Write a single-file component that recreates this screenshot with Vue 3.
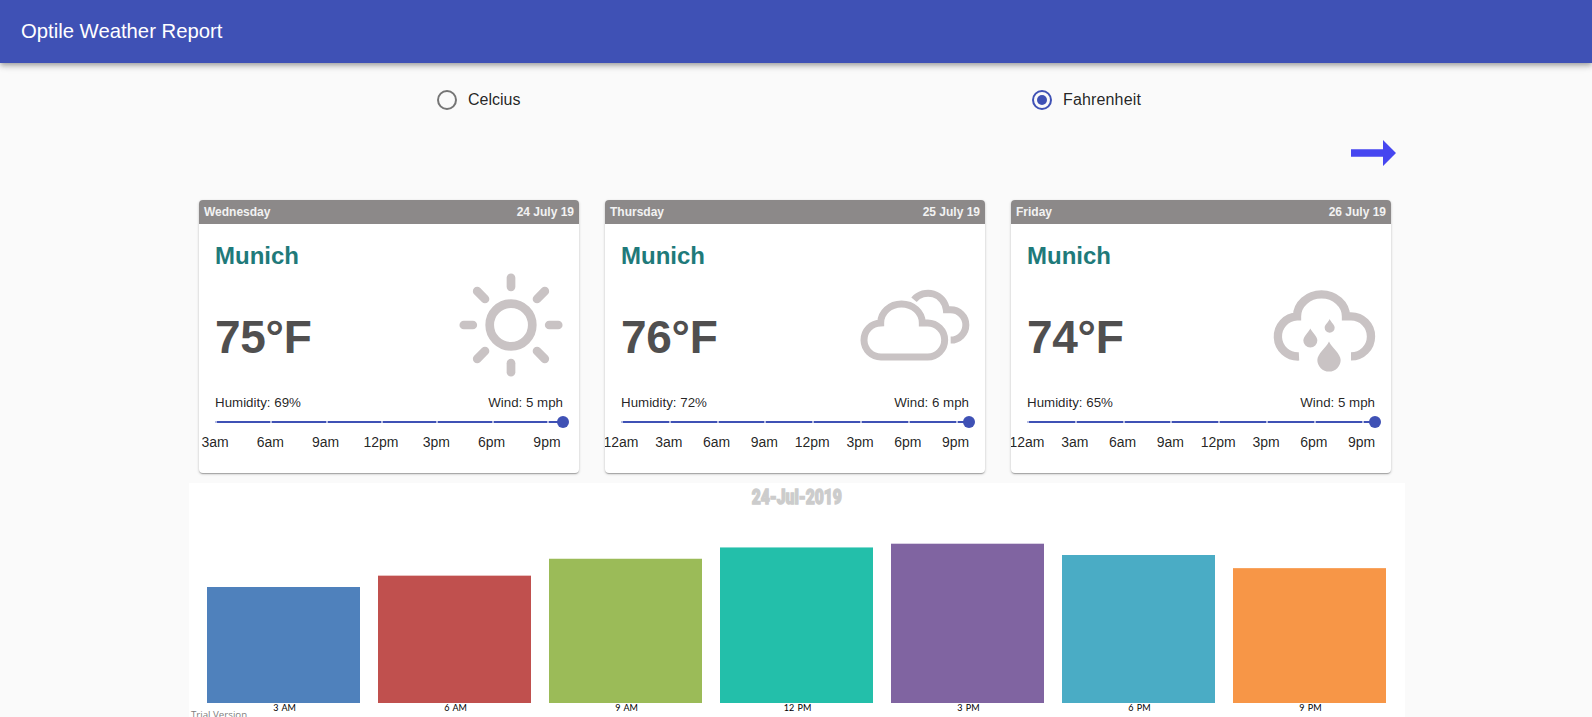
<script setup>
import { ref } from 'vue'

const unit = ref('fahrenheit')

const shortDay = ['3am', '6am', '9am', '12pm', '3pm', '6pm', '9pm']
const fullDay = ['12am', ...shortDay]

const cards = [
  { day: 'Wednesday', date: '24 July 19', city: 'Munich', temp: '75°F', humidity: '69%', wind: '5 mph', icon: 'sun', hours: shortDay, step: 55.33 },
  { day: 'Thursday', date: '25 July 19', city: 'Munich', temp: '76°F', humidity: '72%', wind: '6 mph', icon: 'clouds', hours: fullDay, step: 47.8 },
  { day: 'Friday', date: '26 July 19', city: 'Munich', temp: '74°F', humidity: '65%', wind: '5 mph', icon: 'rain', hours: fullDay, step: 47.8 }
]

const bars = [
  { label: '3 AM', height: 116, color: '#4f81bc' },
  { label: '6 AM', height: 127.35, color: '#c0504e' },
  { label: '9 AM', height: 144.25, color: '#9bbb58' },
  { label: '12 PM', height: 155.55, color: '#23bfaa' },
  { label: '3 PM', height: 159.3, color: '#8064a1' },
  { label: '6 PM', height: 148, color: '#4aacc5' },
  { label: '9 PM', height: 134.85, color: '#f79647' }
]

const rays = [0, 45, 90, 135, 180, 225, 270, 315]
</script>

<template>
  <div class="page">
    <header class="bar"><h1>Optile Weather Report</h1></header>

    <div class="units">
      <label class="unit celsius" @click="unit = 'celsius'">
        <span class="radio" :class="{ on: unit === 'celsius' }"></span>Celcius
      </label>
      <label class="unit fahrenheit" @click="unit = 'fahrenheit'">
        <span class="radio" :class="{ on: unit === 'fahrenheit' }"></span>Fahrenheit
      </label>
    </div>

    <div class="pager">
      <svg width="46" height="26" viewBox="0 0 46 26"><path d="M0 9.3H32V0L45 13L32 26V16.7H0Z" fill="#4646f0" /></svg>
    </div>

    <main class="cards">
      <article v-for="c in cards" :key="c.day" class="card">
        <div class="head"><span>{{ c.day }}</span><span>{{ c.date }}</span></div>
        <div class="body">
          <h2>{{ c.city }}</h2>
          <div class="now">
            <div class="temp">{{ c.temp }}</div>
            <svg v-if="c.icon === 'sun'" class="icon" width="104" height="104" viewBox="-52 -52 104 104">
              <circle r="21.3" />
              <path v-for="a in rays" :key="a" :d="a % 90 ? 'M0 -36.8V-47.8' : 'M0 -38.2V-47.2'" stroke-linecap="round" :transform="`rotate(${a})`" />
            </svg>
            <svg v-else-if="c.icon === 'clouds'" class="icon" width="120" height="104" viewBox="-6 -10.3 360 312">
              <g transform="translate(-2 -18)" stroke-width="21">
                <path d="M93 259.5A51 51 0 0 1 91 157.5A62.5 57 0 0 1 216 157.5H232A51 51 0 0 1 232 259.5Z" />
                <path d="M191 88A55 55 0 0 1 288 118H301A45.5 45.5 0 0 1 301 209" />
              </g>
            </svg>
            <svg v-else class="icon" width="120" height="104" viewBox="-6 -10.3 360 312">
              <g transform="translate(10 -18)" stroke-width="25">
                <path d="M116 258A60.3 60 0 0 1 110 138A73.5 66 0 0 1 257 138H272A60 60 0 0 1 272 258" />
                <g class="drops">
                  <path d="M208 146C212 156 223 163 223 172A15 15 0 0 1 193 172C193 163 204 156 208 146Z" />
                  <path d="M150 174C156 187 171 197 171 210A21 21.500 0 0 1 129 210C129 197 144 187 150 174Z" />
                  <path d="M206 213C215 233 241 249 241 269A35 34.500 0 0 1 171 269C171 249 197 233 206 213Z" />
                </g>
              </g>
            </svg>
          </div>
          <div class="stats"><span>Humidity: {{ c.humidity }}</span><span>Wind: {{ c.wind }}</span></div>
          <div class="slider">
            <i v-for="(h, n) in c.hours" :key="h" class="mark" :style="{ left: n * c.step + 'px' }"></i>
            <i class="thumb"></i>
          </div>
          <div class="hours" :style="{ marginLeft: -c.step / 2 + 'px' }">
            <span v-for="h in c.hours" :key="h" :style="{ width: c.step + 'px' }">{{ h }}</span>
          </div>
        </div>
      </article>
    </main>

    <section class="chart">
      <h3><span>24-Jul-2019</span></h3>
      <div class="bars">
        <div v-for="b in bars" :key="b.label" class="col">
          <svg width="153" height="160"><rect width="153" :y="160 - b.height" :height="b.height" :fill="b.color" /></svg>
          <span>{{ b.label }}</span>
        </div>
      </div>
      <div class="trial">Trial Version</div>
    </section>
  </div>
</template>

<style>
body { margin: 0; overflow: hidden; background: #fafafa; }
</style>

<style scoped>
.page { height: 717px; overflow: hidden; background: #fafafa; font-family: "Liberation Sans", Arial, sans-serif; color: rgba(0, 0, 0, .87); }
.bar { position: relative; height: 63px; box-sizing: border-box; padding: 0 0 2px 21px; display: flex; align-items: center; background: #3f51b5; color: #fff; box-shadow: 0 2px 4px -1px rgba(0,0,0,.2), 0 4px 5px rgba(0,0,0,.14), 0 1px 10px rgba(0,0,0,.12); }
h1 { margin: 0; font-size: 20.3px; font-weight: 400; line-height: 24px; white-space: nowrap; }
.units { display: flex; height: 20px; padding: 27px 0 0 437px; }
.unit { display: flex; align-items: center; gap: 11px; font-size: 16px; line-height: 20px; }
.celsius { width: 595px; }
.fahrenheit { letter-spacing: .15px; }
.radio { width: 20px; height: 20px; box-sizing: border-box; border: 2px solid #757575; border-radius: 50%; display: flex; align-items: center; justify-content: center; }
.radio.on { border-color: #3f51b5; }
.radio.on::after { content: ""; width: 10px; height: 10px; border-radius: 50%; background: #3f51b5; }
.pager { padding: 30px 195px 0 0; display: flex; justify-content: flex-end; }
.pager svg { display: block; }
.cards { display: flex; gap: 26px; margin: 34px 0 0 199px; }
.card { flex: none; width: 380px; height: 273px; border-radius: 4px; overflow: hidden; background: #fff; box-shadow: 0 1px 3px rgba(0,0,0,.2), 0 1px 1px rgba(0,0,0,.14), 0 2px 1px -1px rgba(0,0,0,.12); }
.head { height: 24px; padding: 0 5px; display: flex; justify-content: space-between; background: #8c8989; color: #f2f2f2; font-size: 12px; font-weight: 700; line-height: 24px; }
.body { padding: 18px 16px 0; }
h2 { margin: 0; font-size: 24px; line-height: 28px; color: #1f7a7a; }
.now { display: flex; justify-content: space-between; height: 104px; margin-top: 3px; }
.temp { font-size: 46px; font-weight: 700; line-height: 52px; padding-top: 38px; letter-spacing: -.3px; color: #504f4f; }
.icon { display: block; fill: none; stroke: #c9c3c4; stroke-width: 8.7; overflow: visible; }
.drops { fill: #c9c3c4; stroke: none; }
.stats { display: flex; justify-content: space-between; margin-top: 17px; font-size: 13.33px; line-height: 18px; }
.slider { position: relative; height: 2px; margin: 9px 1px 0 0; background: #3f51b5; }
.mark { position: absolute; top: 0; width: 2px; height: 2px; background: #b6bde2; }
.thumb { position: absolute; top: -5px; right: -7px; width: 12px; height: 12px; border-radius: 50%; background: #3f51b5; }
.hours { display: flex; margin-top: 10px; font-size: 14px; line-height: 18px; }
.hours span { flex: none; text-align: center; }
.chart { width: 1216px; height: 244px; margin: 10px 0 0 189px; background: #fff; }
h3 { margin: 0; height: 60px; display: flex; justify-content: center; font: 900 20px/28px Roboto, sans-serif; color: #ccc; -webkit-text-stroke: 1.4px #ccc; }
h3 span { transform: scaleX(.78); height: 28px; }
.bars { display: flex; gap: 18px; padding-left: 18px; }
.col { width: 153px; }
.col svg { display: block; }
.col span { display: block; height: 10px; padding-left: 2px; text-align: center; font: 9px/9px Lato, sans-serif; word-spacing: 1px; color: #000; }
.trial { padding-left: 2px; margin-top: -3px; font: 9.7px/10px "Open Sans", sans-serif; color: #808080; }
</style>
